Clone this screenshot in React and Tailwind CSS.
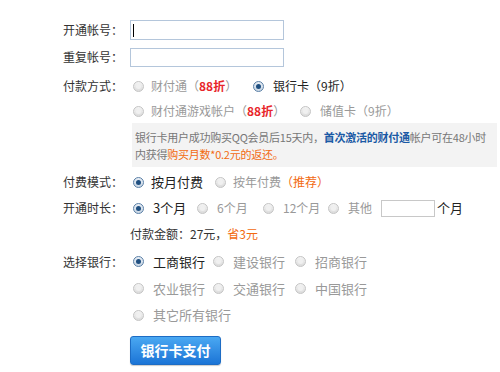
import React from "react";

function Radio({ checked }) {
  return (
    <span
      className={
        "inline-flex items-center justify-center w-[11px] h-[11px] rounded-full border shrink-0 " +
        (checked
          ? "border-[#5a7fa6] bg-gradient-to-b from-[#e8eef5] to-[#c9d6e4]"
          : "border-[#c4c4c4] bg-gradient-to-b from-[#f4f4f4] to-[#dcdcdc]")
      }
    >
      {checked ? <span className="w-[5px] h-[5px] rounded-full bg-[#1f4f80]" /> : <span className="w-[5px] h-[5px] rounded-full bg-[#f0f0f0]" />}
    </span>
  );
}

function Opt({ checked, children, gap = "gap-[7px]", className = "" }) {
  return (
    <span className={"inline-flex items-center " + gap + " " + className}>
      <Radio checked={checked} />
      <span className={checked ? "text-[#222]" : "text-[#999]"}>{children}</span>
    </span>
  );
}

function Label({ children }) {
  return <span className="w-[67px] shrink-0 text-[#333]">{children}</span>;
}

export default function App() {
  return (
    <div
      className="w-[500px] h-[372px] bg-white overflow-hidden text-[12px] leading-[14px]"
      style={{ fontFamily: '"Microsoft YaHei","Noto Sans CJK SC",sans-serif' }}
    >
      <div className="pl-[63px] pt-[20px] flex flex-col">
        <div className="flex items-center h-[20px]">
          <Label>开通帐号：</Label>
          <div className="w-[154px] h-[20px] border border-[#b4c6db] flex items-center pl-[2px]">
            <span className="w-[1px] h-[13px] bg-black" />
          </div>
        </div>
        <div className="flex items-center h-[20px] mt-[7px]">
          <Label>重复帐号：</Label>
          <div className="w-[154px] h-[19px] border border-[#b4c6db]" />
        </div>
        <div className="flex items-center h-[26px] mt-[6px]">
          <Label>付款方式：</Label>
          <div className="flex items-center pl-[3px]">
            <Opt checked={false} className="w-[120px]">
              财付通（<span className="text-[#e8262b] font-bold">88折</span>）
            </Opt>
            <Opt checked={true} gap="gap-[9px]">银行卡（9折）</Opt>
          </div>
        </div>
        <div className="flex items-center h-[24px]">
          <Label></Label>
          <div className="flex items-center pl-[3px]">
            <Opt checked={false} className="w-[167px]">
              财付通游戏帐户（<span className="text-[#e8262b] font-bold">88折</span>）
            </Opt>
            <Opt checked={false} gap="gap-[9px]">储值卡（9折）</Opt>
          </div>
        </div>
        <div className="ml-[69px] w-[365px] h-[44px] bg-[#f3f3f3] pl-[3px] pt-[6px] text-[11px] leading-[17px] tracking-[-0.25px] text-[#777] whitespace-nowrap">
          银行卡用户成功购买QQ会员后15天内，<span className="text-[#1b5aa5] font-bold">首次激活的财付通</span>帐户可在48小时
          <br />
          内获得<span className="text-[#f26a10]">购买月数*0.2元的返还。</span>
        </div>
        <div className="flex items-center h-[26px] mt-[2px]">
          <Label>付费模式：</Label>
          <div className="flex items-center pl-[3px]">
            <Opt checked={true} className="w-[82px] text-[13px]">按月付费</Opt>
            <Opt checked={false}>
              按年付费<span className="text-[#f26a10]">（推荐）</span>
            </Opt>
          </div>
        </div>
        <div className="flex items-center h-[26px]">
          <Label>开通时长：</Label>
          <div className="flex items-center pl-[3px]">
            <Opt checked={true} gap="gap-[9px]" className="w-[64px] text-[13px]">3个月</Opt>
            <Opt checked={false} gap="gap-[9px]" className="w-[66px]">6个月</Opt>
            <Opt checked={false} gap="gap-[9px]" className="w-[65px]">12个月</Opt>
            <Opt checked={false} gap="gap-[9px]" className="w-[53px]">其他</Opt>
            <div className="w-[54px] h-[17px] border border-[#c8c8c8]" />
            <span className="ml-[2px] text-[13px] text-[#222]">个月</span>
          </div>
        </div>
        <div className="flex items-center h-[26px]">
          <Label></Label>
          <span className="text-[#333]">
            付款金额：27元，<span className="text-[#f26a10]">省3元</span>
          </span>
        </div>
        <div className="flex items-center h-[27px] mt-[1px]">
          <Label>选择银行：</Label>
          <div className="flex items-center pl-[3px] text-[13px]">
            <Opt checked={true} gap="gap-[9px]" className="w-[80px]">工商银行</Opt>
            <Opt checked={false} gap="gap-[9px]" className="w-[82px]">建设银行</Opt>
            <Opt checked={false} gap="gap-[9px]">招商银行</Opt>
          </div>
        </div>
        <div className="flex items-center h-[27px]">
          <Label></Label>
          <div className="flex items-center pl-[3px] text-[13px]">
            <Opt checked={false} gap="gap-[9px]" className="w-[80px]">农业银行</Opt>
            <Opt checked={false} gap="gap-[9px]" className="w-[82px]">交通银行</Opt>
            <Opt checked={false} gap="gap-[9px]">中国银行</Opt>
          </div>
        </div>
        <div className="flex items-center h-[26px]">
          <Label></Label>
          <div className="flex items-center pl-[3px] text-[13px]">
            <Opt checked={false} gap="gap-[9px]">其它所有银行</Opt>
          </div>
        </div>
        <div className="flex mt-[8px]">
          <Label></Label>
          <button className="w-[91px] h-[29px] rounded-[3px] border border-[#1d6cc4] bg-gradient-to-b from-[#4aa8f2] to-[#1b74d6] text-white font-bold text-[14px] leading-[27px] shadow-[0_1px_1px_rgba(0,0,0,0.2)]">
            银行卡支付
          </button>
        </div>
      </div>
    </div>
  );
}
